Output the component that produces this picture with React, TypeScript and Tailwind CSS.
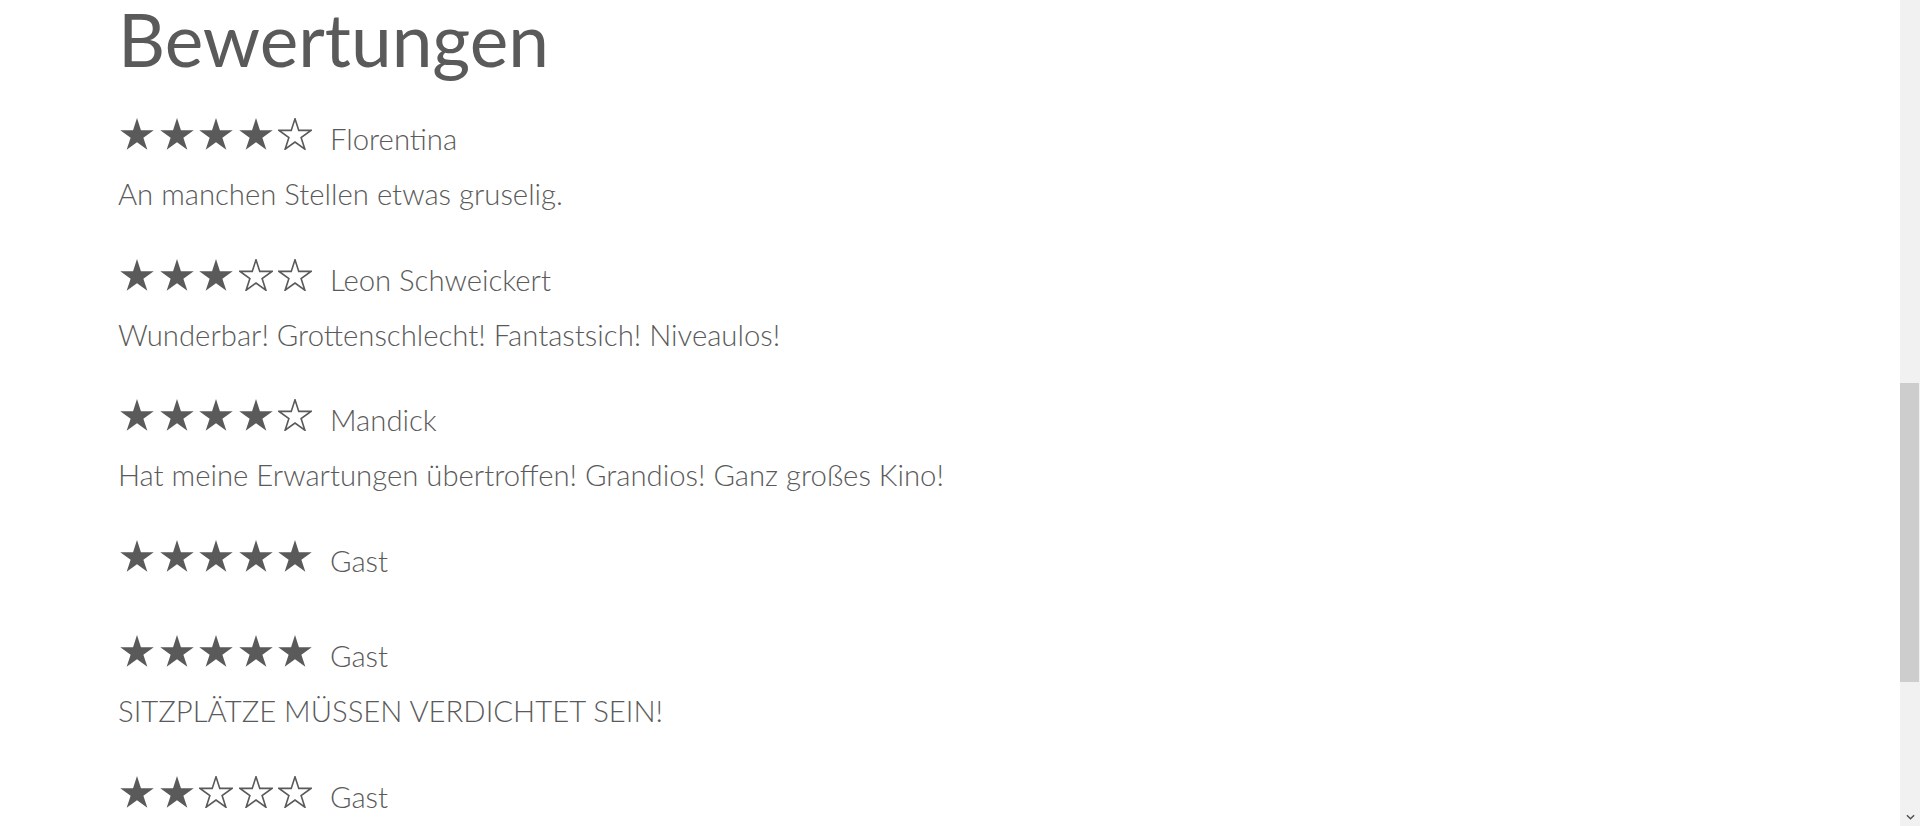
import { FC } from 'react'

type Review = { stars: number; name: string; text?: string }

const reviews: Review[] = [
  { stars: 4, name: 'Florentina', text: 'An manchen Stellen etwas gruselig.' },
  { stars: 3, name: 'Leon Schweickert', text: 'Wunderbar! Grottenschlecht! Fantastsich! Niveaulos!' },
  { stars: 4, name: 'Mandick', text: 'Hat meine Erwartungen übertroffen! Grandios! Ganz großes Kino!' },
  { stars: 5, name: 'Gast' },
  { stars: 5, name: 'Gast', text: 'SITZPLÄTZE MÜSSEN VERDICHTET SEIN!' },
  { stars: 2, name: 'Gast', text: 'Ein ganz normaler Kinobesuch.' },
]

const starPoints = (r: number) => {
  const cx = 17
  const cy = 17.6
  const pts: string[] = []
  for (let i = 0; i < 10; i++) {
    const rad = i % 2 === 0 ? r : r * 0.382
    const a = -Math.PI / 2 + (i * Math.PI) / 5
    pts.push(`${(cx + rad * Math.cos(a)).toFixed(2)},${(cy + rad * Math.sin(a)).toFixed(2)}`)
  }
  return pts.join(' ')
}

const Star: FC<{ filled: boolean }> = ({ filled }) => (
  <svg viewBox="0 0 34 32" className="w-[34px] h-[32px] block">
    {filled ? (
      <polygon points={starPoints(17.6)} fill="#5a5a5a" />
    ) : (
      <polygon points={starPoints(16.8)} fill="none" stroke="#5a5a5a" strokeWidth="1.6" strokeLinejoin="miter" />
    )}
  </svg>
)

const ReviewItem: FC<{ review: Review }> = ({ review }) => (
  <div className="mb-[40.5px]">
    <div className="flex items-baseline h-[55px]">
      <div className="flex gap-[5.5px] ml-[2px]">
        {[0, 1, 2, 3, 4].map((i) => (
          <Star key={i} filled={i < review.stars} />
        ))}
      </div>
      <span className="ml-[18px] text-[29.3px] leading-[45px]">{review.name}</span>
    </div>
    {review.text && <p className="text-[29.3px] leading-[45px]">{review.text}</p>}
  </div>
)

const App = () => {
  return (
    <div className="flex w-full h-[826px] overflow-hidden bg-white text-[#5a5a5a] font-light font-['Lato','Open_Sans',sans-serif]">
      <main className="flex-1 pl-[118px]">
        <h1 className="text-[73px] font-normal leading-[78px] mb-[38px]">Bewertungen</h1>
        {reviews.map((r, i) => (
          <ReviewItem key={i} review={r} />
        ))}
      </main>
      <aside className="w-[20px] h-full bg-[#f1f1f1] flex flex-col items-center">
        <div className="mt-[383px] w-[19px] self-start h-[299px] bg-[#cdcdcd]" />
        <div className="mt-auto mb-[6px]">
          <svg viewBox="0 0 10 6" className="w-[9px] h-[6px]">
            <path d="M1 1 L5 5 L9 1" fill="none" stroke="#505050" strokeWidth="1.6" />
          </svg>
        </div>
      </aside>
    </div>
  )
}

export default App
